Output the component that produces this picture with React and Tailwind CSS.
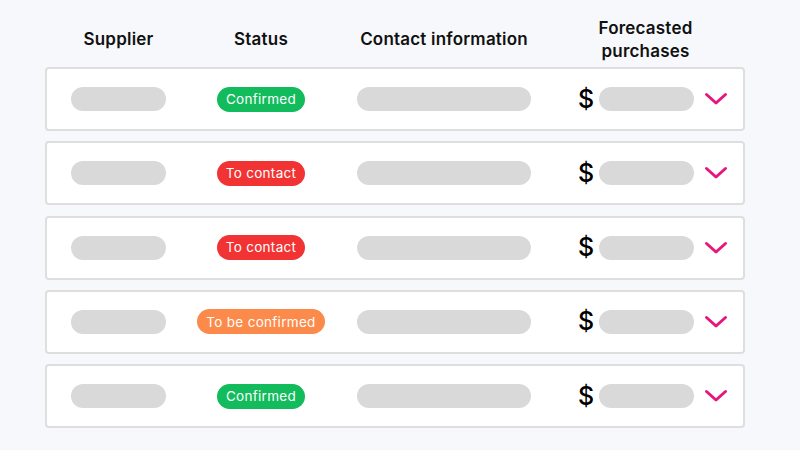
import React from "react";

const rows = [
  { status: "Confirmed", color: "bg-[#12bb5b]" },
  { status: "To contact", color: "bg-[#f23333]" },
  { status: "To contact", color: "bg-[#f23333]" },
  { status: "To be confirmed", color: "bg-[#fb8a4b]" },
  { status: "Confirmed", color: "bg-[#12bb5b]" },
];

const cols = "grid grid-cols-[143px_142px_224px_1fr] items-center";

function Chevron() {
  return (
    <svg width="24" height="14" viewBox="0 0 24 14" fill="none">
      <path d="M2.5 2.5 L12 11 L21.5 2.5" stroke="#e8167c" strokeWidth="3" strokeLinecap="round" strokeLinejoin="round" />
    </svg>
  );
}

export default function App() {
  return (
    <div className="w-[800px] h-[450px] bg-[#f7f8fb] pt-[16px] pl-[45px]" style={{ fontFamily: "Inter, 'Noto Sans', sans-serif" }}>
      <div className="w-[700px]">
        <div className={`${cols} h-[46px] border-x-2 border-transparent text-[17px] font-semibold text-[#111] leading-[23px] tracking-[0.2px]`}>
          <div className="text-center">Supplier</div>
          <div className="text-center">Status</div>
          <div className="text-center">Contact information</div>
          <div className="text-center pr-2 pt-[1px]">Forecasted<br />purchases</div>
        </div>
        <div className="mt-[5px] flex flex-col gap-[10.3px]">
          {rows.map((r, i) => (
            <div key={i} className={`${cols} h-[64px] bg-white border-2 border-[#dedede] rounded-[4px]`}>
              <div className="flex justify-center">
                <div className="w-[95px] h-[24px] rounded-full bg-[#d9d9d9]" />
              </div>
              <div className="flex justify-center">
                <span className={`${r.color} h-[25px] px-[9px] rounded-full text-white text-[13.5px] font-normal flex items-center tracking-[0.3px]`}>
                  {r.status}
                </span>
              </div>
              <div className="flex justify-center">
                <div className="w-[174px] h-[24px] rounded-full bg-[#d9d9d9]" />
              </div>
              <div className="flex items-center pl-[22px]">
                <span className="text-[25px] font-medium text-black leading-none w-[21px]">$</span>
                <div className="w-[95px] h-[24px] rounded-full bg-[#d9d9d9]" />
                <div className="ml-[10px] flex items-center"><Chevron /></div>
              </div>
            </div>
          ))}
        </div>
      </div>
    </div>
  );
}
